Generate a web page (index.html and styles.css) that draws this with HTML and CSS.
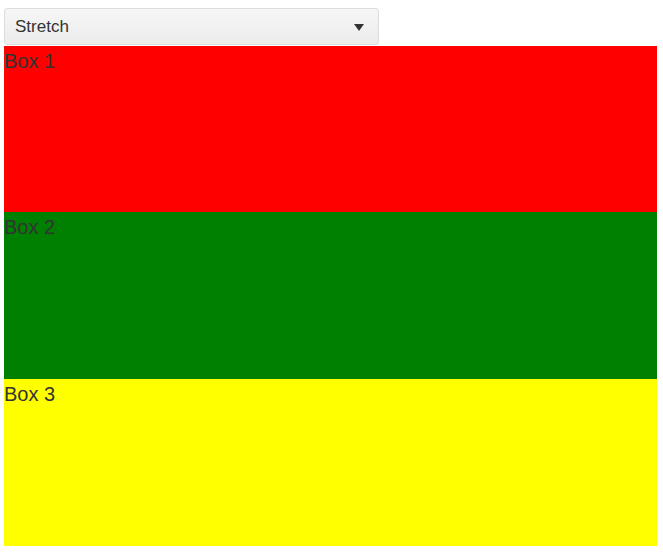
FILE: index.html
```html
<!DOCTYPE html>
<html>
<head>
<meta charset="utf-8">
<link rel="stylesheet" href="styles.css">
</head>
<body>
<div class="page">
  <div class="select">
    <span class="select-value">Stretch</span>
    <span class="select-arrow"></span>
  </div>
  <div class="boxes">
    <div class="box box-red">Box 1</div>
    <div class="box box-green">Box 2</div>
    <div class="box box-yellow">Box 3</div>
  </div>
</div>
</body>
</html>
```
FILE: styles.css
```css
html, body {
  margin: 0;
  padding: 0;
  background: #fff;
}
.page {
  padding: 8px 0 0 4px;
  width: 653px;
  font-family: "Liberation Sans", Arial, sans-serif;
  color: #333;
}
.select {
  box-sizing: border-box;
  width: 375px;
  height: 37px;
  border: 1px solid #dcdcdc;
  border-radius: 3px;
  background: linear-gradient(#f6f6f6, #ececec);
  display: flex;
  align-items: center;
  justify-content: space-between;
  padding: 0 14px 0 10px;
  margin-bottom: 1px;
}
.select-value {
  font-size: 17px;
  color: #333;
}
.select-arrow {
  width: 0;
  height: 0;
  border-left: 5px solid transparent;
  border-right: 5px solid transparent;
  border-top: 7px solid #333;
  margin-top: 1px;
}
.boxes {
  display: flex;
  flex-direction: column;
}
.box {
  height: 167px;
  font-size: 20px;
  line-height: 30px;
  color: #333;
}
.box-red { height: 166px; background: #ff0000; }
.box-green { background: #008000; }
.box-yellow { background: #ffff00; }
```
